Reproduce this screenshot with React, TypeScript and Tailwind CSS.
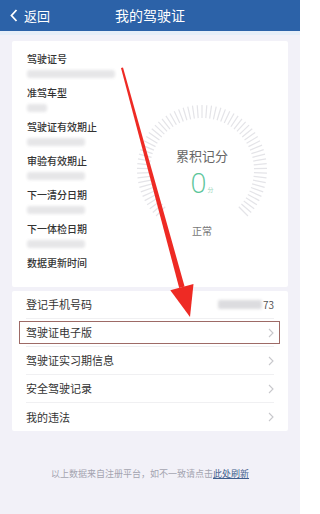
import React from "react";

const font = { fontFamily: '"Noto Sans CJK SC", "Noto Sans", sans-serif' };

const infoItems = [
  { label: "驾驶证号", blur: "w-[88px]" },
  { label: "准驾车型", blur: "w-[20px]" },
  { label: "驾驶证有效期止", blur: "w-[58px]" },
  { label: "审验有效期止", blur: "w-[58px]" },
  { label: "下一清分日期", blur: "w-[58px]" },
  { label: "下一体检日期", blur: "w-[58px]" },
  { label: "数据更新时间", blur: "" },
];

const listItems = ["驾驶证电子版", "驾驶证实习期信息", "安全驾驶记录", "我的违法"];

const Chevron = () => (
  <svg width="6" height="10" viewBox="0 0 6 10" className="shrink-0">
    <path d="M1 1l4 4-4 4" fill="none" stroke="#c8c8cc" strokeWidth="1.1" />
  </svg>
);

const Gauge = () => {
  const ticks = [];
  const n = 64;
  for (let i = 0; i <= n; i++) {
    const a = ((135 + (270 * i) / n) * Math.PI) / 180;
    const r1 = 52;
    const r2 = 65;
    ticks.push(
      <line
        key={i}
        x1={70 + r1 * Math.cos(a)}
        y1={70 + r1 * Math.sin(a)}
        x2={70 + r2 * Math.cos(a)}
        y2={70 + r2 * Math.sin(a)}
        stroke="#e4e4e8"
        strokeWidth="1.2"
      />
    );
  }
  return (
    <svg width="140" height="140" viewBox="0 0 140 140">
      {ticks}
    </svg>
  );
};

export default function App() {
  return (
    <div className="relative w-[300px] h-[514px] overflow-hidden bg-[#f2f1f8]" style={font}>
      <div className="h-[31px] bg-[#2c62a8] flex items-center relative">
        <div className="flex items-center pl-[10px] gap-[6px] text-white text-[13px]">
          <svg width="8" height="13" viewBox="0 0 8 13">
            <path d="M6.5 1L1.5 6.5l5 5.5" fill="none" stroke="#fff" strokeWidth="1.8" />
          </svg>
          <span>返回</span>
        </div>
        <div className="absolute inset-0 flex items-center justify-center text-white text-[14px]">
          我的驾驶证
        </div>
      </div>
      <div className="h-[4px] bg-[#e6eef8]" />

      <div className="mx-[12px] mt-[6px] bg-white rounded-[2px] flex pt-[11px] pb-[11px]">
        <div className="w-[118px] pl-[15px] flex flex-col">
          {infoItems.map((it) => (
            <div key={it.label} className="h-[34px] last:h-[20px] flex flex-col">
              <span className="text-[10px] leading-[14px] text-[#333] font-medium">{it.label}</span>
              {it.blur && (
                <div className={`${it.blur} h-[8px] mt-[4px] rounded-[3px] bg-[#e6e6e8] blur-[1.5px]`} />
              )}
            </div>
          ))}
        </div>
        <div className="flex-1 flex flex-col items-center pt-[48px] pr-[14px]">
          <div className="relative w-[140px] h-[140px]">
            <Gauge />
            <div className="absolute inset-0 flex flex-col items-center pt-[48px]">
              <span className="text-[13px] leading-[16px] text-[#666]">累积记分</span>
              <div className="flex items-end mt-[3px]">
                <span className="text-[28px] leading-[30px] text-[#5cc59a] font-light" style={{ fontFamily: '"Open Sans", sans-serif' }}>0</span>
                <span className="text-[6px] text-[#9ad6bb] mb-[3px] ml-[1px]">分</span>
              </div>
              <span className="text-[10px] text-[#777] mt-[26px]">正常</span>
            </div>
          </div>
        </div>
      </div>

      <div className="mx-[12px] mt-[4px] bg-white rounded-[2px] flex flex-col px-[14px]">
        <div className="h-[28px] flex items-center justify-between border-b border-[#f0f0f2]">
          <span className="text-[11px] text-[#333]">登记手机号码</span>
          <div className="flex items-center">
            <div className="w-[44px] h-[9px] bg-[#dcdcdf] blur-[1.5px] rounded-[2px]" />
            <span className="text-[10px] text-[#555] ml-[1px]">73</span>
          </div>
        </div>
        {listItems.map((t, i) => (
          <div
            key={t}
            className="relative h-[28px] flex items-center justify-between border-b border-[#f0f0f2] last:border-b-0"
          >
            <span className="text-[11px] text-[#333]">{t}</span>
            <Chevron />
            {i === 0 && (
              <div className="absolute left-[-7px] right-[-6px] top-[2px] bottom-[2px] border border-[#9d6a66]" />
            )}
          </div>
        ))}
      </div>

      <div className="mt-[36px] text-center text-[9px] text-[#a4a4b0]">
        以上数据来自注册平台，如不一致请点击<span className="text-[#3f5e8c] underline">此处刷新</span>
      </div>

      <svg className="absolute inset-0 pointer-events-none" width="300" height="514" viewBox="0 0 300 514">
        <polygon points="121,68 123,67.5 184.6,286.5 179.2,288" fill="#ee2a24" />
        <polygon points="190,317 170.3,290.3 193.5,283.9" fill="#ee2a24" />
      </svg>
    </div>
  );
}
